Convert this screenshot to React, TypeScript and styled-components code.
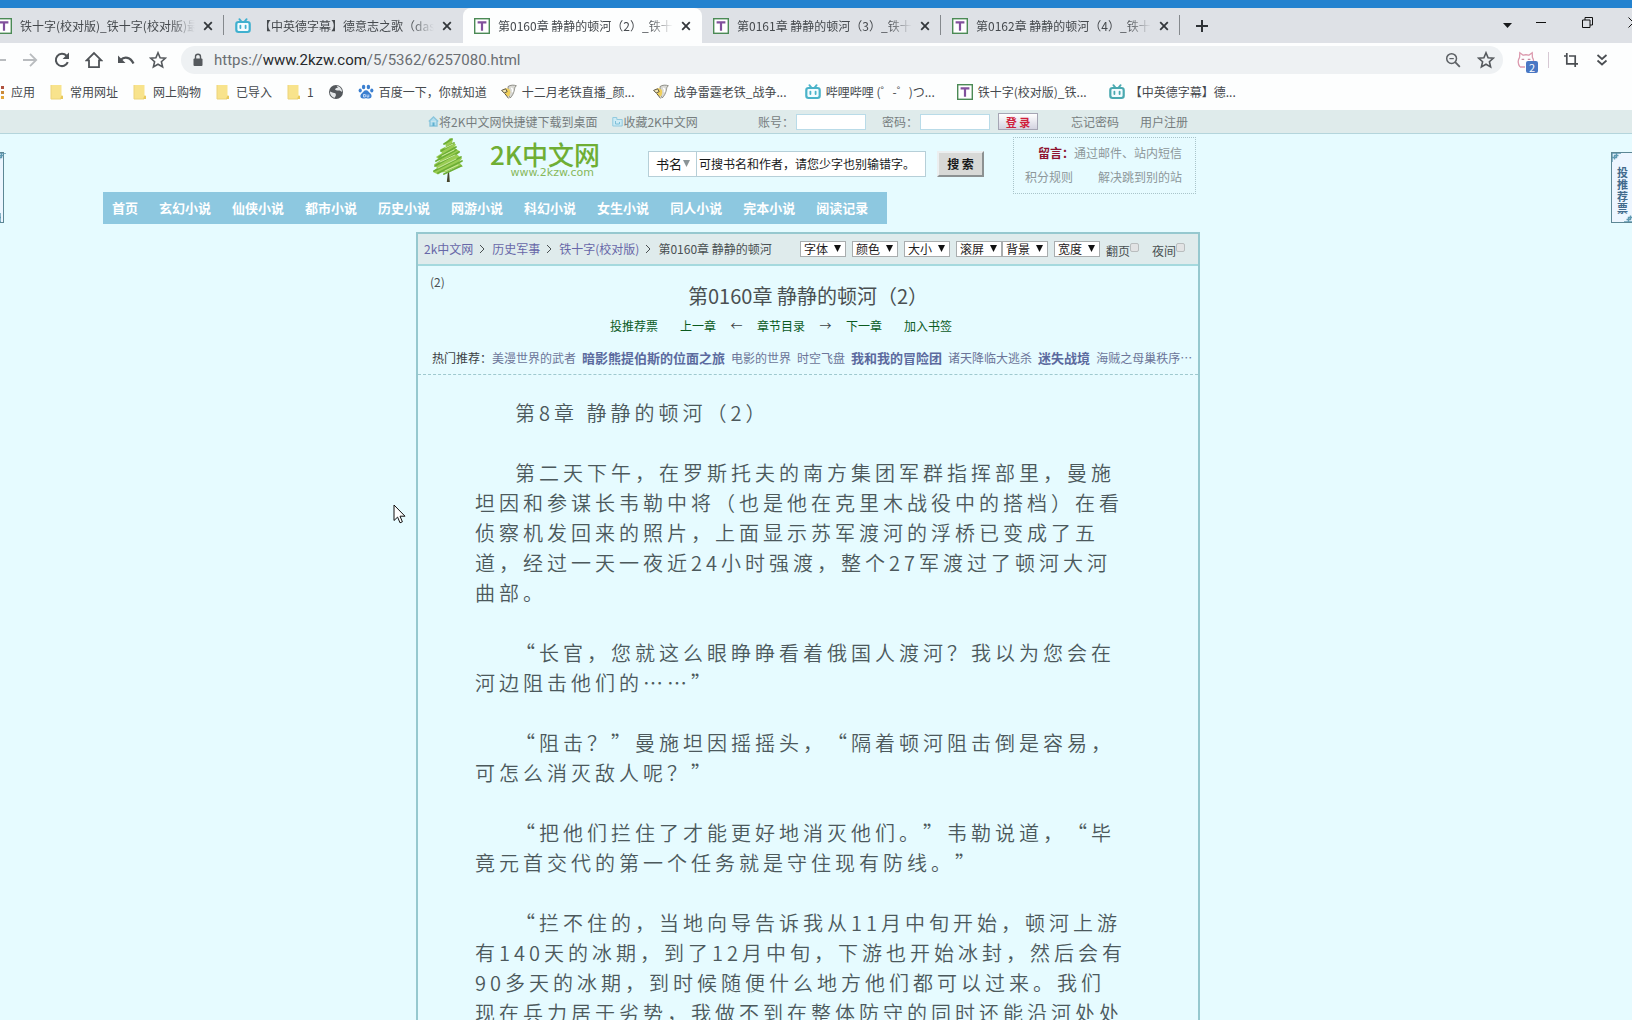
import React from "react";
import styled, { createGlobalStyle, css } from "styled-components";

const sans = `"Noto Sans CJK SC", "Noto Sans", sans-serif`;

const Global = createGlobalStyle`
  *, *::before, *::after { box-sizing: border-box; }
  body {
    margin: 0;
    background: #e6fbff;
    font-family: ${sans};
    font-size: 12px;
    line-height: 16px;
    color: #4a5052;
  }
  button, input, select { font: inherit; margin: 0; padding: 0; }
  button { border: 0; background: none; color: inherit; cursor: pointer; }
  a { color: inherit; text-decoration: none; }
  svg { display: block; flex: none; }
  p, h1 { margin: 0; }
`;

/* ---------- icons ---------- */

const TIcon = () => (
  <svg width="16" height="16" viewBox="0 0 16 16" aria-hidden="true">
    <rect x="0.7" y="0.7" width="14.6" height="14.6" fill="#fff" stroke="#4b8a55" strokeWidth="1.4" />
    <path d="M3.6 4.4h8.8M8 4.4v8.4" stroke="#81509c" strokeWidth="2.2" fill="none" />
  </svg>
);

const TvIcon = ({ color = "#3fb0cf" }: { color?: string }) => (
  <svg width="16" height="16" viewBox="0 0 16 16" aria-hidden="true" fill="none" stroke={color}>
    <path d="M4.4 1.2l2 2.4M11.6 1.2l-2 2.4" strokeWidth="1.8" strokeLinecap="round" />
    <rect x="1.3" y="4" width="13.4" height="10" rx="2.2" strokeWidth="2.2" fill="#f3fcff" />
    <path d="M5.4 7.6v2.4M10.6 7.6v2.4" strokeWidth="1.8" strokeLinecap="round" />
  </svg>
);

const CloseIcon = () => (
  <svg width="10" height="10" viewBox="0 0 10 10" aria-hidden="true">
    <path d="M1.2 1.2l7.6 7.6M8.8 1.2L1.2 8.8" stroke="#33373b" strokeWidth="1.8" />
  </svg>
);

const StarIcon = () => (
  <svg width="18" height="18" viewBox="0 0 18 18" aria-hidden="true">
    <path
      d="M9 1.8l2.1 4.9 5.3.5-4 3.5 1.2 5.2L9 13.2l-4.6 2.7 1.2-5.2-4-3.5 5.3-.5z"
      fill="none"
      stroke="#55595d"
      strokeWidth="1.6"
      strokeLinejoin="miter"
    />
  </svg>
);

const FolderIcon = () => (
  <svg width="16" height="16" viewBox="0 0 16 16" aria-hidden="true">
    <path d="M2 1h10.5v10.8H14V15H2z" fill="#f8e38c" />
    <path d="M12.5 11.5L11 15h3v-3z" fill="#e9c95c" />
    <path d="M2 1v14h10" fill="none" stroke="#ecd47a" />
  </svg>
);

const GlobeIcon = () => (
  <svg width="16" height="16" viewBox="0 0 16 16" aria-hidden="true">
    <circle cx="8" cy="8" r="7" fill="#54585c" />
    <path d="M8.500 1.800l1.500 1.800-2.200.6-.8 1.600 2 .8 2.800-.2 2.300 1.600C14 5 12 2.200 8.500 1.800z" fill="#e4e7e9" />
    <path d="M2 7.600l3 1.200 2.400.4.600 1.800-1.200 2.800C3.600 13.200 1.800 10.600 2 7.600z" fill="#e4e7e9" />
  </svg>
);

const PawIcon = () => (
  <svg width="16" height="16" viewBox="0 0 16 16" aria-hidden="true" fill="#3b7fd0">
    <ellipse cx="5.600" cy="3" rx="1.700" ry="2.200" />
    <ellipse cx="10.400" cy="3" rx="1.700" ry="2.200" />
    <ellipse cx="2.200" cy="6.600" rx="1.600" ry="2" />
    <ellipse cx="13.800" cy="6.600" rx="1.600" ry="2" />
    <path d="M8 6.200c2.200 0 2.800 2 4.400 3.400 2 1.800 1.400 5-1.400 5-1.200 0-1.800-.3-3-.3s-1.800.3-3 .3c-2.800 0-3.400-3.200-1.400-5C5.200 8.200 5.800 6.200 8 6.200z" />
    <path d="M5.500 10.500h1.800v2.500H5.500zM9 10.500v2.500h1.800v-2.500" fill="none" stroke="#dcebff" strokeWidth=".8" />
  </svg>
);

const FishIcon = () => (
  <svg width="16" height="16" viewBox="0 0 16 16" aria-hidden="true">
    <path d="M7 2.600c2.400-1.800 6-1.800 8.400-.8-1.400.6-1.600 2-2 4-.6 3.200-2 6-4.200 8.200L7.400 11z" fill="#d9d9d4" stroke="#77776f" strokeWidth=".8" />
    <path d="M4 4.600c2-1 4.400 0 5 2s0 5-1.800 6.200C5.600 12 3.400 9.600 3 7.600z" fill="#f0cf5a" />
    <path d="M.6 6.400l4-1.600 1.600 2.800-3 1.400zM3.600 9.400l4 5" stroke="#5b5541" strokeWidth="1" fill="#f4e8b6" />
    <path d="M10 4.200c1.400 0 2 1.600 1.400 4" stroke="#fff" strokeWidth="1.500" fill="none" />
  </svg>
);

const AppsIcon = () => (
  <svg width="16" height="16" viewBox="0 0 16 16" aria-hidden="true">
    {[2, 7, 12].map((y, i) => (
      <g key={y}>
        <rect x="1" y={y} width="3" height="3" fill="#d65a4a" />
        <rect x="6" y={y} width="3" height="3" fill="#4a8ad6" />
        <rect x="11" y={y} width="3" height="3" fill={["#b0523f", "#c98a3a", "#e2a63a"][i]} />
      </g>
    ))}
  </svg>
);

const ForwardIcon = ({ back }: { back?: boolean }) => (
  <svg width="18" height="18" viewBox="0 0 18 18" aria-hidden="true">
    <path
      d={back ? "M17 9H3M9 2.500L2.500 9 9 15.500" : "M2 9h13M9 2.800L15.200 9 9 15.200"}
      fill="none"
      stroke="#b9bcbf"
      strokeWidth="1.800"
    />
  </svg>
);

const ReloadIcon = () => (
  <svg width="18" height="18" viewBox="0 0 18 18" aria-hidden="true">
    <path d="M14.800 11.200A6.200 6.200 0 1 1 13.600 4.700" fill="none" stroke="#505458" strokeWidth="2" />
    <path d="M16 1.600v6.400H9.600z" fill="#505458" />
  </svg>
);

const HomeIcon = () => (
  <svg width="18" height="18" viewBox="0 0 18 18" aria-hidden="true">
    <path d="M1.600 9.400L9 2l7.400 7.400H14v6.800H4V9.400z" fill="none" stroke="#505458" strokeWidth="1.800" />
  </svg>
);

const UndoIcon = () => (
  <svg width="18" height="18" viewBox="0 0 18 18" aria-hidden="true">
    <path d="M3.500 9C7.500 5 13.500 6 16.500 12.500" fill="none" stroke="#505458" strokeWidth="2.200" />
    <path d="M1 4.500V12h7.500z" fill="#505458" />
  </svg>
);

const LockIcon = () => (
  <svg width="12" height="14" viewBox="0 0 12 14" aria-hidden="true">
    <rect x="1.500" y="5.500" width="9" height="7.500" rx="1" fill="#55595d" />
    <path d="M3.500 6V3.800a2.500 2.500 0 0 1 5 0V6" fill="none" stroke="#55595d" strokeWidth="1.400" />
  </svg>
);

const ZoomOutIcon = () => (
  <svg width="16" height="16" viewBox="0 0 16 16" aria-hidden="true" fill="none" stroke="#5d6165">
    <circle cx="6.600" cy="6.600" r="4.900" strokeWidth="1.500" />
    <path d="M10.200 10.200l4.600 4.600" strokeWidth="1.800" />
    <path d="M4.400 6.600h4.400" strokeWidth="1.200" />
  </svg>
);

const CatIcon = () => (
  <svg width="18" height="18" viewBox="0 0 18 18" aria-hidden="true" fill="none" stroke="#dc9aae" strokeWidth="1.300">
    <path d="M3 16C1 13 .800 9 2.600 6.400L2.800 1.800l3.400 2.400c1.800-.6 3.800-.6 5.600 0l3.400-2.400.2 4.600c.8 1.200 1.200 2.400 1.200 3.800M3 16h5" />
    <path d="M4.600 8.400h2.600M10.800 8.400h2.600" stroke="#c98aa0" />
  </svg>
);

const CropIcon = () => (
  <svg width="16" height="16" viewBox="0 0 16 16" aria-hidden="true" fill="none" stroke="#4a4e52" strokeWidth="1.700">
    <path d="M3.800 1v10.800H15M1 4h2.800M6 4h6.200v11" />
  </svg>
);

const ChevronsIcon = () => (
  <svg width="12" height="14" viewBox="0 0 12 14" aria-hidden="true" fill="none" stroke="#4a4e52" strokeWidth="1.700">
    <path d="M1.500 2L6 6l4.500-4M1.500 7.500l4.500 4 4.500-4" />
  </svg>
);

const TreeIcon = () => (
  <svg width="32" height="46" viewBox="0 0 32 46" aria-hidden="true">
    <path d="M16 34l1 0 .8 11h-3z" fill="#46452c" />
    <path d="M18 1l3 1.500-1 3 4 2-2 3 6 4-3 3 5 4-3 3.500 4 4.500-8 1.500-9 4-5 .5-3 2-5-2.500 4-4-3-3.500 6-4-4-3.500 6-4-2-3.500 6-3-1-3z" fill="#9acd54" />
    <g stroke="#6cae35" strokeWidth="1.800" strokeLinecap="round" fill="none">
      <path d="M12 7l8-5M9 14l13-8M7 20l17-10M4 24l20-11M3 29l24-14M2 34l27-14M6 36l24-12M12 37l17-8" />
    </g>
    <g stroke="#cdeaa0" strokeWidth="1" strokeLinecap="round" fill="none">
      <path d="M13 11l8-4M10 19l12-6M8 25l15-7M6 31l18-9M13 34l13-6" />
    </g>
  </svg>
);

const HouseMini = () => (
  <svg width="11" height="11" viewBox="0 0 11 11" aria-hidden="true">
    <path d="M.8 5.600L5.500 1l4.700 4.600M2 5v5h7V5" fill="#b4dff0" stroke="#8cc6dc" strokeWidth="1.400" />
    <path d="M4.500 10V6.500h2V10" fill="#5fb0cf" />
  </svg>
);

const FolderMini = () => (
  <svg width="11" height="11" viewBox="0 0 11 11" aria-hidden="true">
    <path d="M.8 10V1.500h4v2h5.400V10z" fill="#cdebf5" stroke="#92cadf" />
    <path d="M3.500 5v3h4V6" fill="none" stroke="#7dbfd8" />
  </svg>
);

const CrumbMark = () => (
  <svg width="7" height="16" viewBox="0 0 7 16" aria-hidden="true">
    <path d="M1 4L5 8l-4 4" fill="none" stroke="#4a5052" />
  </svg>
);

const Arrowhead = styled.svg.attrs({ width: 7, height: 7, viewBox: "0 0 7 7", "aria-hidden": true })``;

/* ---------- browser frame ---------- */

const Frame = styled.div`
  height: 100vh;
  display: flex;
  flex-direction: column;
  overflow: hidden;
`;

const TabStrip = styled.div`
  display: flex;
  flex: none;
  height: 43px;
  border-top: 8px solid #2382cf;
  background: #dee1e6;
  overflow: hidden;
`;

const Tabs = styled.nav`
  display: flex;
  flex: none;
  margin-left: -15px;
`;

const Tab = styled.div<{ $active?: boolean; $line?: boolean }>`
  position: relative;
  display: flex;
  align-items: center;
  width: 239px;
  padding: 0 11px;
  gap: 8px;
  color: #45494d;
  ${(p) =>
    p.$active &&
    css`
      background: #fdfefe;
      border-radius: 8px 8px 0 0;
    `}
  ${(p) =>
    p.$line &&
    css`
      &::after {
        content: "";
        position: absolute;
        right: 0;
        top: 7px;
        width: 1px;
        height: 20px;
        background: #85898d;
      }
    `}
`;

const TabTitle = styled.a`
  flex: 1;
  overflow: hidden;
  white-space: nowrap;
  mask-image: linear-gradient(to right, #000 86%, transparent);
`;

const PlusButton = styled.button`
  display: grid;
  place-items: center;
  width: 44px;
`;

const WindowControls = styled.div`
  display: flex;
  margin-left: auto;
  margin-right: -24px;
  height: 28px;
  flex: none;
`;

const WindowButton = styled.button<{ $w: number }>`
  display: grid;
  place-items: center;
  width: ${(p) => p.$w}px;
`;

const Toolbar = styled.div`
  display: flex;
  flex: none;
  align-items: center;
  height: 33px;
  background: #fdfefe;
`;

const ToolGroup = styled.div`
  display: flex;
  gap: 14px;
  margin-left: -11px;
  margin-right: 14px;
`;

const ToolButton = styled.button`
  display: grid;
  place-items: center;
  flex: none;
  width: 18px;
  height: 18px;
`;

const AddressBar = styled.div`
  display: flex;
  flex: 1;
  align-items: center;
  gap: 15px;
  height: 28px;
  padding: 0 8px 0 11px;
  border-radius: 14px;
  background: #eef1f3;
`;

const Address = styled.div`
  flex: 1;
  display: flex;
  align-items: center;
  gap: 10px;
  font: 15px/20px Roboto, "Noto Sans", sans-serif;
  color: #6a6e72;
  b { font-weight: 400; color: #26292c; }
`;

const Extensions = styled.div`
  display: flex;
  align-items: center;
  gap: 13px;
  padding: 0 21px 0 14px;
`;

const Badged = styled.button`
  position: relative;
`;

const Badge = styled.span`
  position: absolute;
  left: 9px;
  top: 10px;
  width: 12px;
  height: 12px;
  border-radius: 2px;
  background: #4a78c4;
  color: #fff;
  font-size: 11px;
  line-height: 12px;
`;

const Divider = styled.span`
  width: 1px;
  height: 16px;
  background: #d6c9d4;
`;

const Bookmarks = styled.nav`
  display: flex;
  flex: none;
  align-items: center;
  gap: 14px;
  height: 34px;
  padding-bottom: 2px;
  margin-left: -10px;
  background: #fdfefe;
  color: #45494d;
`;

const Bookmark = styled.a<{ $wide?: boolean }>`
  display: flex;
  align-items: center;
  gap: 5px;
  flex: none;
  width: ${(p) => (p.$wide ? "138px" : "auto")};
  white-space: nowrap;
`;

/* ---------- site ---------- */

const Page = styled.div`
  position: relative;
  flex: 1;
  min-height: 0;
  overflow: hidden;
  background: #e6fbff;
`;

const AccountBar = styled.div`
  height: 24px;
  padding-right: 16px;
  background: #dfebeb;
  border-bottom: 1px solid #b4d5dc;
  color: #767d7e;
`;

const Column = styled.div`
  max-width: 784px;
  margin: 0 auto;
`;

const AccountRow = styled(Column)`
  display: flex;
  align-items: center;
  height: 23px;
  padding: 0 12px;
`;

const MiniLink = styled.a`
  display: flex;
  align-items: center;
  margin-right: 15px;
`;

const Login = styled.form`
  display: flex;
  align-items: center;
  margin-left: auto;
  margin-right: 33px;
  label { padding-right: 2px; }
  input {
    width: 70px;
    height: 16px;
    margin-right: 16px;
    border: 1px solid #b9dbe8;
    background: #fff;
  }
  input + label + input { margin-right: 8px; }
`;

const LoginButton = styled.button`
  width: 40px;
  height: 17px;
  border: 1px solid #a5a5b4;
  background: linear-gradient(#fff, #d3d3e0);
  color: #d01f3c;
  font-size: 11px;
  font-weight: 700;
  line-height: 14px;
`;

const AccountLinks = styled.div`
  display: flex;
  gap: 21px;
`;

const Header = styled.header`
  padding-right: 16px;
`;

const HeaderRow = styled(Column)`
  display: flex;
  align-items: flex-start;
  height: 57px;
  padding: 3px 4px 0 16px;
`;

const Logo = styled.a`
  display: flex;
  gap: 26px;
  margin-right: 50px;
  color: #6fae34;
`;

const LogoWords = styled.span`
  display: flex;
  flex-direction: column;
  width: 108px;
  padding-top: 4px;
  white-space: nowrap;
  strong { font-size: 26px; line-height: 26px; font-weight: 500; }
  span { font: 11px/12px "DejaVu Sans", sans-serif; align-self: flex-end; padding-right: 4px; color: #86b85a; }
`;

const Search = styled.form`
  display: flex;
  margin-top: 14px;
  height: 26px;
  color: #17191a;
`;

const SearchType = styled.span`
  position: relative;
  width: 49px;
  select {
    width: 49px;
    height: 26px;
    padding-left: 7px;
    appearance: none;
    border: 1px solid #b6cfd8;
    border-radius: 0;
    background: #fff;
    color: #17191a;
    font-size: 13px;
  }
  svg { position: absolute; right: 7px; top: 9px; }
`;

const SearchInput = styled.input`
  width: 230px;
  margin-left: -1px;
  margin-right: 11px;
  padding: 0 2px;
  border: 1px solid #b6cfd8;
  background: #fff;
  color: #17191a;
`;

const SearchButton = styled.button`
  width: 47px;
  border: 2px solid;
  border-color: #eceff0 #8c9192 #8c9192 #eceff0;
  background: #d8d9d7;
  font-weight: 700;
`;

const Notice = styled.aside`
  display: flex;
  flex-direction: column;
  gap: 8px;
  width: 183px;
  height: 57px;
  margin-left: auto;
  padding: 7px 13px 0 11px;
  border: 1px dotted #a9c4ca;
  color: #8d979a;
  white-space: nowrap;
`;

const NoticeLine = styled.div<{ $end?: boolean }>`
  display: flex;
  justify-content: ${(p) => (p.$end ? "flex-end" : "space-between")};
  strong { color: #8e1330; }
`;

const Categories = styled.nav`
  display: flex;
  gap: 21px;
  width: max-content;
  margin: 1px 0 0 103px;
  padding: 0 19px 0 9px;
  background: #8dc8e0;
  color: #fff;
  font-size: 13px;
  font-weight: 700;
  line-height: 32px;
`;

const ReaderWrap = styled.main`
  margin-top: 8px;
  padding-right: 16px;
`;

const Reader = styled(Column)`
  border: 2px solid #96c8cf;
  border-bottom: 0;
  padding-bottom: 60px;
`;

const ReaderBar = styled.div`
  display: flex;
  align-items: center;
  height: 32px;
  padding: 0 13px 0 6px;
  border-bottom: 2px solid #a5d9de;
  background: #dfebec;
`;

const Crumbs = styled.div`
  display: flex;
  gap: 6px;
  margin-right: auto;
  white-space: nowrap;
  a { color: #6767a8; }
`;

const Option = styled.span<{ $tight?: boolean }>`
  position: relative;
  flex: none;
  margin-left: ${(p) => (p.$tight ? 0 : 6)}px;
  select {
    display: block;
    width: 46px;
    height: 16px;
    padding-left: 3px;
    appearance: none;
    border: 1px solid #a9adae;
    border-radius: 0;
    background: #fff;
    color: #1e2021;
    line-height: 14px;
  }
  svg { position: absolute; right: 5px; top: 4px; }
`;

const Toggle = styled.label<{ $gap: number }>`
  display: flex;
  align-items: flex-start;
  flex: none;
  margin: 3px 0 0 ${(p) => p.$gap}px;
  input {
    appearance: none;
    width: 9px;
    height: 9px;
    border: 1px solid #b9bdbe;
    border-radius: 2px;
    background: #e2e3e4;
  }
`;

const ChapterHead = styled.section`
  border-bottom: 1px dashed #9fc9cf;
`;

const CrumbRest = styled.div`
  height: 16px;
  margin-top: 8px;
  padding-left: 12px;
`;

const Title = styled.h1`
  font-size: 20px;
  font-weight: 400;
  line-height: 28px;
  margin-top: -8px;
  text-align: center;
  text-spacing-trim: space-all;
`;

const ChapterLinks = styled.nav`
  display: flex;
  justify-content: center;
  margin-top: 8px;
  padding-right: 54px;
  color: #0a5a1e;
`;

const Arrow = styled.span`
  width: 41px;
  text-align: center;
  color: #3c4244;
`;

const Gap = styled.span`
  width: 22px;
`;

const HotLinks = styled.div`
  display: flex;
  gap: 6px;
  margin: 16px 0 8px;
  padding-left: 14px;
  white-space: nowrap;
  color: #6c7599;
  a { flex: none; }
  b { font-size: 13px; color: #5b6a9e; }
  > span { color: #3c4244; margin-right: -6px; text-spacing-trim: space-all; }
`;

const Prose = styled.article`
  display: flex;
  flex-direction: column;
  gap: 30px;
  width: 653px;
  margin: 23px 0 0 57px;
  color: #4c595c;
  font-size: 20px;
  font-weight: 350;
  line-height: 30px;
  letter-spacing: 4px;
  text-spacing-trim: space-all;
  p { text-indent: 40px; }
`;

const Ticket = styled.aside<{ $side: "left" | "right" }>`
  position: absolute;
  top: 42px;
  ${(p) => p.$side}: -4px;
  width: ${(p) => (p.$side === "left" ? 8 : 25)}px;
  height: 71px;
  border: 1px solid #5d8795;
  background: #edf6ff;
  color: #426a8c;
  a {
    display: block;
    width: 12px;
    margin: 13px 0 0 5px;
    font-size: 11px;
    font-weight: 700;
    line-height: 12px;
  }
  svg { position: absolute; }
  svg:first-of-type { left: 0; top: 0; }
  svg:last-of-type { right: 2px; bottom: 0; }
`;

const Fret = ({ flip }: { flip?: boolean }) => (
  <svg width="9" height="9" viewBox="0 0 9 9" aria-hidden="true">
    <path
      d={flip ? "M9 0v9H0M6.500 2.500v4h-4M9 4.500H4.500V9" : "M0 9V0h9M2.500 6.500v-4h4M0 4.500h4.500V0"}
      fill="none"
      stroke="#5f9ab2"
      strokeWidth="1.400"
    />
  </svg>
);

const Pointer = styled.svg`
  position: absolute;
  left: 393px;
  top: 394px;
`;

/* ---------- data ---------- */

const tabs = [
  { title: "铁十字(校对版)_铁十字(校对版)最新章节", icon: <TIcon />, line: true },
  { title: "【中英德字幕】德意志之歌（das lied", icon: <TvIcon /> },
  { title: "第0160章 静静的顿河（2）_铁十字", icon: <TIcon />, active: true },
  { title: "第0161章 静静的顿河（3）_铁十字", icon: <TIcon />, line: true },
  { title: "第0162章 静静的顿河（4）_铁十字", icon: <TIcon />, line: true },
];

const bookmarks = [
  { label: "应用", icon: <AppsIcon /> },
  { label: "常用网址", icon: <FolderIcon /> },
  { label: "网上购物", icon: <FolderIcon /> },
  { label: "已导入", icon: <FolderIcon /> },
  { label: "1", icon: <FolderIcon /> },
  { label: "", icon: <GlobeIcon /> },
  { label: "百度一下，你就知道", icon: <PawIcon /> },
  { label: "十二月老铁直播_颜...", icon: <FishIcon />, wide: true },
  { label: "战争雷霆老铁_战争...", icon: <FishIcon />, wide: true },
  { label: "哔哩哔哩 (゜-゜)つ...", icon: <TvIcon color="#4ab3c9" />, wide: true },
  { label: "铁十字(校对版)_铁...", icon: <TIcon />, wide: true },
  { label: "【中英德字幕】德...", icon: <TvIcon color="#4aa9b0" />, wide: true },
];

const categories = [
  "首页", "玄幻小说", "仙侠小说", "都市小说", "历史小说", "网游小说",
  "科幻小说", "女生小说", "同人小说", "完本小说", "阅读记录",
];

const options = ["字体", "颜色", "大小", "滚屏", "背景", "宽度"];

const hot = [
  { t: "美漫世界的武者" },
  { t: "暗影熊提伯斯的位面之旅", bold: true },
  { t: "电影的世界" },
  { t: "时空飞盘" },
  { t: "我和我的冒险团", bold: true },
  { t: "诸天降临大逃杀" },
  { t: "迷失战境", bold: true },
  { t: "海贼之母巢秩序…" },
];

const paragraphs = [
  "第8章 静静的顿河（2）",
  "第二天下午，在罗斯托夫的南方集团军群指挥部里，曼施坦因和参谋长韦勒中将（也是他在克里木战役中的搭档）在看侦察机发回来的照片，上面显示苏军渡河的浮桥已变成了五道，经过一天一夜近24小时强渡，整个27军渡过了顿河大河曲部。",
  "“长官，您就这么眼睁睁看着俄国人渡河？我以为您会在河边阻击他们的……”",
  "“阻击？”曼施坦因摇摇头，“隔着顿河阻击倒是容易，可怎么消灭敌人呢？”",
  "“把他们拦住了才能更好地消灭他们。”韦勒说道，“毕竟元首交代的第一个任务就是守住现有防线。”",
  "“拦不住的，当地向导告诉我从11月中旬开始，顿河上游有140天的冰期，到了12月中旬，下游也开始冰封，然后会有90多天的冰期，到时候随便什么地方他们都可以过来。我们现在兵力居于劣势，我做不到在整体防守的同时还能沿河处处",
];

/* ---------- page ---------- */

export default function App() {
  return (
    <Frame lang="zh-CN">
      <Global />
      <TabStrip>
        <Tabs aria-label="标签页">
          {tabs.map((t) => (
            <Tab key={t.title} $active={t.active} $line={t.line}>
              {t.icon}
              <TabTitle href="#">{t.title}</TabTitle>
              <button aria-label="关闭"><CloseIcon /></button>
            </Tab>
          ))}
        </Tabs>
        <PlusButton aria-label="新标签页">
          <svg width="12" height="12" viewBox="0 0 12 12"><path d="M6 0v12M0 6h12" stroke="#2e3236" strokeWidth="2" /></svg>
        </PlusButton>
        <WindowControls>
          <WindowButton $w={22} aria-label="搜索标签页">
            <svg width="9" height="16" viewBox="0 0 9 16"><path d="M0 9h9L4.500 14z" fill="#17191b" /></svg>
          </WindowButton>
          <WindowButton $w={46} aria-label="最小化">
            <svg width="10" height="10" viewBox="0 0 10 10"><path d="M0 5.500h10" stroke="#111" /></svg>
          </WindowButton>
          <WindowButton $w={46} aria-label="还原">
            <svg width="11" height="11" viewBox="0 0 11 11" fill="none" stroke="#111">
              <path d="M.5 3h7.500v7.500H.5zM3 3V.5h7.500V8H8" />
            </svg>
          </WindowButton>
          <WindowButton $w={46} aria-label="关闭窗口">
            <svg width="11" height="11" viewBox="0 0 11 11"><path d="M.5.5l10 10M10.500.5l-10 10" stroke="#111" /></svg>
          </WindowButton>
        </WindowControls>
      </TabStrip>

      <Toolbar>
        <ToolGroup>
          <ToolButton aria-label="后退"><ForwardIcon back /></ToolButton>
          <ToolButton aria-label="前进"><ForwardIcon /></ToolButton>
          <ToolButton aria-label="重新加载"><ReloadIcon /></ToolButton>
          <ToolButton aria-label="主页"><HomeIcon /></ToolButton>
          <ToolButton aria-label="撤销"><UndoIcon /></ToolButton>
          <ToolButton aria-label="收藏夹"><StarIcon /></ToolButton>
        </ToolGroup>
        <AddressBar>
          <Address>
            <LockIcon />
            <span>https://<b>www.2kzw.com</b>/5/5362/6257080.html</span>
          </Address>
          <ToolButton aria-label="缩小"><ZoomOutIcon /></ToolButton>
          <ToolButton aria-label="收藏"><StarIcon /></ToolButton>
        </AddressBar>
        <Extensions>
          <Badged aria-label="扩展程序"><CatIcon /><Badge>2</Badge></Badged>
          <Divider />
          <ToolButton aria-label="截图"><CropIcon /></ToolButton>
          <ToolButton aria-label="更多"><ChevronsIcon /></ToolButton>
        </Extensions>
      </Toolbar>

      <Bookmarks aria-label="书签栏">
        {bookmarks.map((b, i) => (
          <Bookmark key={i} href="#" $wide={b.wide} aria-label={b.label || "网页"}>
            {b.icon}
            {b.label && <span>{b.label}</span>}
          </Bookmark>
        ))}
      </Bookmarks>

      <Page>
        <AccountBar>
          <AccountRow>
            <MiniLink href="#"><HouseMini />将2K中文网快捷键下载到桌面</MiniLink>
            <MiniLink href="#"><FolderMini />收藏2K中文网</MiniLink>
            <Login onSubmit={(e) => e.preventDefault()}>
              <label htmlFor="user">账号：</label>
              <input id="user" type="text" />
              <label htmlFor="pass">密码：</label>
              <input id="pass" type="password" />
              <LoginButton>登 录</LoginButton>
            </Login>
            <AccountLinks>
              <a href="#">忘记密码</a>
              <a href="#">用户注册</a>
            </AccountLinks>
          </AccountRow>
        </AccountBar>

        <Header>
          <HeaderRow>
            <Logo href="#">
              <TreeIcon />
              <LogoWords>
                <strong>2K中文网</strong>
                <span>www.2kzw.com</span>
              </LogoWords>
            </Logo>
            <Search onSubmit={(e) => e.preventDefault()}>
              <SearchType>
                <select aria-label="搜索类型" defaultValue="书名">
                  <option>书名</option>
                </select>
                <Arrowhead><path d="M0 0h7L3.500 7z" fill="#8b9497" /></Arrowhead>
              </SearchType>
              <SearchInput aria-label="搜索" defaultValue="可搜书名和作者，请您少字也别输错字。" />
              <SearchButton>搜 索</SearchButton>
            </Search>
            <Notice>
              <NoticeLine $end>
                <strong>留言：</strong>
                <a href="#">通过邮件、站内短信</a>
              </NoticeLine>
              <NoticeLine>
                <a href="#">积分规则</a>
                <a href="#">解决跳到别的站</a>
              </NoticeLine>
            </Notice>
          </HeaderRow>
        </Header>

        <Categories>
          {categories.map((c) => <a key={c} href="#">{c}</a>)}
        </Categories>

        <ReaderWrap>
          <Reader>
            <ReaderBar>
              <Crumbs>
                <a href="#">2k中文网</a><CrumbMark />
                <a href="#">历史军事</a><CrumbMark />
                <a href="#">铁十字(校对版)</a><CrumbMark />
                <span>第0160章 静静的顿河</span>
              </Crumbs>
              {options.map((o) => (
                <Option key={o} $tight={o === "背景"}>
                  <select aria-label={o} defaultValue={o}>
                    <option>{o}</option>
                  </select>
                  <Arrowhead><path d="M0 0h7L3.500 7z" fill="#111" /></Arrowhead>
                </Option>
              ))}
              <Toggle $gap={6}>翻页<input type="checkbox" /></Toggle>
              <Toggle $gap={13}>夜间<input type="checkbox" /></Toggle>
            </ReaderBar>

            <ChapterHead>
              <CrumbRest>(2)</CrumbRest>
              <Title>第0160章 静静的顿河（2）</Title>
              <ChapterLinks>
                <a href="#">投推荐票</a><Gap />
                <a href="#">上一章</a><Arrow>←</Arrow>
                <a href="#">章节目录</a><Arrow>→</Arrow>
                <a href="#">下一章</a><Gap />
                <a href="#">加入书签</a>
              </ChapterLinks>
              <HotLinks>
                <span>热门推荐：</span>
                {hot.map((h) => <a key={h.t} href="#">{h.bold ? <b>{h.t}</b> : h.t}</a>)}
              </HotLinks>
            </ChapterHead>

            <Prose>
              {paragraphs.map((p) => <p key={p}>{p}</p>)}
            </Prose>
          </Reader>
        </ReaderWrap>

        <Ticket $side="left"><Fret /><Fret flip /></Ticket>
        <Ticket $side="right">
          <Fret />
          <a href="#">投推荐票</a>
          <Fret flip />
        </Ticket>
        <Pointer width="14" height="21" viewBox="0 0 14 21" aria-hidden="true">
          <path d="M1 1v15.500l3.600-3.400 2.400 5.700 2.400-1-2.400-5.600h5z" fill="#fff" stroke="#111" />
        </Pointer>
      </Page>
    </Frame>
  );
}
